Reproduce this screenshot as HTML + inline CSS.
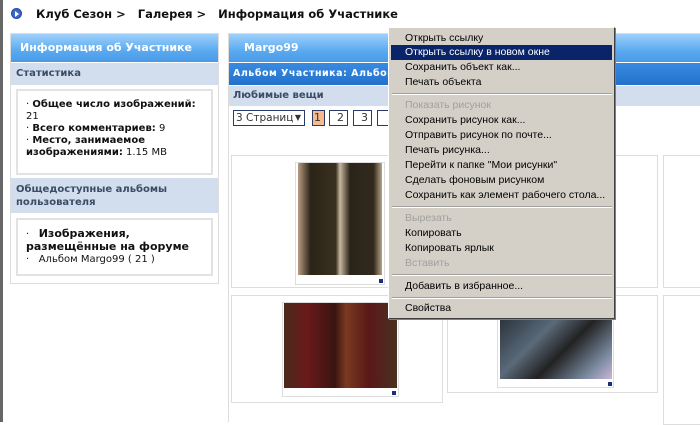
<!DOCTYPE html>
<html><head><meta charset="utf-8"><style>
*{margin:0;padding:0;box-sizing:border-box}
body{width:700px;height:422px;overflow:hidden;background:#fff;font-family:"DejaVu Sans","Liberation Sans",sans-serif;position:relative;color:#111}
.a{position:absolute}
.hdr{background:linear-gradient(#9fd0fb,#5aaaf0 60%,#4a9ae8);color:#fff;font-weight:bold;font-size:11px}
.band{background:#d2dded;color:#3a4c66;font-weight:bold;font-size:10px}
.box{border:2px solid #e2e2e2;background:#fff}
.m{font-family:"Liberation Sans",sans-serif;font-size:10.5px;color:#000}
.mi{position:absolute;left:0;width:224px;padding-left:16px;height:15px;line-height:15px;white-space:nowrap}
.sep{position:absolute;left:3px;width:220px;height:2px;border-top:1px solid #a0a0a0;border-bottom:1px solid #fff}
.pg{position:absolute;top:110px;height:16px;border:1px solid #2a3a6a;font-size:11px;text-align:right;padding-right:3px;line-height:14px;color:#333;white-space:nowrap;overflow:hidden}
.cell{position:absolute;border:1px solid #ddd}
.th{position:absolute;border:1px solid #ddd;background:#fff}
.cn{position:absolute;width:4px;height:4px;background:#1a2f7a}
</style></head><body>
<div class="a" style="left:0;top:0;width:3px;height:422px;background:#666"></div>
<div class="a" style="left:11px;top:8px;width:11px;height:11px;border-radius:50%;background:#3b67c8;border:1px solid #2a4a9a"></div>
<div class="a" style="left:15px;top:11px;width:0;height:0;border-left:4px solid #fff;border-top:3px solid transparent;border-bottom:3px solid transparent"></div>
<div class="a" style="left:36px;top:7px;font-size:11.5px;font-weight:bold;white-space:nowrap">Клуб Сезон &gt;&nbsp;&nbsp; Галерея &gt;&nbsp;&nbsp; Информация об Участнике</div>

<div class="a" style="left:10px;top:33px;width:209px;height:251px;border:1px solid #ddd"></div>
<div class="a hdr" style="left:11px;top:34px;width:207px;height:28px;line-height:28px;padding-left:9px">Информация об Участнике</div>
<div class="a band" style="left:11px;top:63px;width:207px;height:22px;line-height:22px;padding-left:5px">Статистика</div>
<div class="a box" style="left:16px;top:89px;width:197px;height:86px;font-size:10px;padding:8px 8px;line-height:12px">
· <b>Общее число изображений:</b><br>21<br>· <b>Всего комментариев:</b> 9<br>· <b>Место, занимаемое изображениями:</b> 1.15 MB</div>
<div class="a band" style="left:11px;top:178px;width:207px;height:35px;line-height:13px;padding:5px">Общедоступные альбомы пользователя</div>
<div class="a box" style="left:16px;top:218px;width:197px;height:58px;font-size:10px;padding:8px 8px;line-height:12px">
· &nbsp;&nbsp;<b style="font-size:11px">Изображения, размещённые на форуме</b><br>· &nbsp;&nbsp;Альбом Margo99 ( 21 )</div>

<div class="a" style="left:228px;top:33px;width:472px;height:389px;border-left:1px solid #ddd;border-top:1px solid #ddd"></div>
<div class="a hdr" style="left:229px;top:34px;width:471px;height:28px;line-height:28px;padding-left:15px">Margo99</div>
<div class="a" style="left:229px;top:63px;width:471px;height:22px;line-height:22px;padding-left:4px;background:linear-gradient(#3a8ae0,#2272cc);color:#fff;font-weight:bold;font-size:9.5px;letter-spacing:0.5px;white-space:nowrap">Альбом Участника: Альбом Margo99</div>
<div class="a band" style="left:229px;top:86px;width:471px;height:20px;line-height:20px;padding-left:4px">Любимые вещи</div>
<div class="pg" style="left:233px;width:72px;text-align:left;padding-left:2px;font-size:10.5px">3 Страниц<span style="font-size:8px;position:absolute;right:3px;top:0">▼</span></div>
<div class="pg" style="left:312px;width:13px;background:#f7b98d">1</div>
<div class="pg" style="left:329px;width:19px">2</div>
<div class="pg" style="left:353px;width:19px">3</div>
<div class="pg" style="left:377px;width:19px"></div>

<div class="cell" style="left:231px;top:155px;width:212px;height:133px"></div>
<div class="cell" style="left:447px;top:155px;width:211px;height:133px"></div>
<div class="cell" style="left:663px;top:155px;width:40px;height:133px"></div>
<div class="cell" style="left:231px;top:295px;width:212px;height:108px"></div>
<div class="cell" style="left:447px;top:295px;width:211px;height:98px"></div>
<div class="cell" style="left:663px;top:295px;width:40px;height:130px"></div>

<div class="th" style="left:295px;top:162px;width:90px;height:123px"></div>
<div class="a" style="left:298px;top:163px;width:84px;height:112px;background:linear-gradient(90deg,#b89c82,#2a2418 15%,#3a3020 45%,#c8b8a0 50%,#2a2418 62%,#332a1e 90%,#b8a488)"></div>
<div class="cn" style="left:379px;top:279px"></div>
<div class="th" style="left:282px;top:302px;width:117px;height:95px"></div>
<div class="a" style="left:284px;top:303px;width:113px;height:85px;background:linear-gradient(90deg,#4a2a1a,#6a1a1a 20%,#3a1410 45%,#7a3a20 55%,#5a1818 75%,#4a3020)"></div>
<div class="cn" style="left:392px;top:391px"></div>
<div class="th" style="left:497px;top:300px;width:117px;height:88px"></div>
<div class="a" style="left:500px;top:300px;width:112px;height:79px;background:linear-gradient(135deg,#1a2226,#5a6a7a 40%,#222 60%,#7a8aa0 85%,#c8b8d8)"></div>
<div class="cn" style="left:608px;top:382px"></div>

<div class="a m" style="left:388px;top:27px;width:227px;height:292px;background:#d4d0c8;border:1px solid;border-color:#fff #404040 #404040 #fff;box-shadow:1px 1px 0 #808080">
<div class="mi" style="top:3px">Открыть ссылку</div>
<div class="mi" style="top:17px;left:2px;width:221px;padding-left:14px;background:#0a246a;color:#fff">Открыть ссылку в новом окне</div>
<div class="mi" style="top:32px">Сохранить объект как...</div>
<div class="mi" style="top:47px">Печать объекта</div>
<div class="sep" style="top:65px"></div>
<div class="mi" style="top:70px;color:#a0a0a0">Показать рисунок</div>
<div class="mi" style="top:85px">Сохранить рисунок как...</div>
<div class="mi" style="top:100px">Отправить рисунок по почте...</div>
<div class="mi" style="top:115px">Печать рисунка...</div>
<div class="mi" style="top:130px">Перейти к папке "Мои рисунки"</div>
<div class="mi" style="top:145px">Сделать фоновым рисунком</div>
<div class="mi" style="top:160px">Сохранить как элемент рабочего стола...</div>
<div class="sep" style="top:178px"></div>
<div class="mi" style="top:183px;color:#a0a0a0">Вырезать</div>
<div class="mi" style="top:198px">Копировать</div>
<div class="mi" style="top:213px">Копировать ярлык</div>
<div class="mi" style="top:228px;color:#a0a0a0">Вставить</div>
<div class="sep" style="top:246px"></div>
<div class="mi" style="top:251px">Добавить в избранное...</div>
<div class="sep" style="top:269px"></div>
<div class="mi" style="top:273px">Свойства</div>
</div>
</body></html>
